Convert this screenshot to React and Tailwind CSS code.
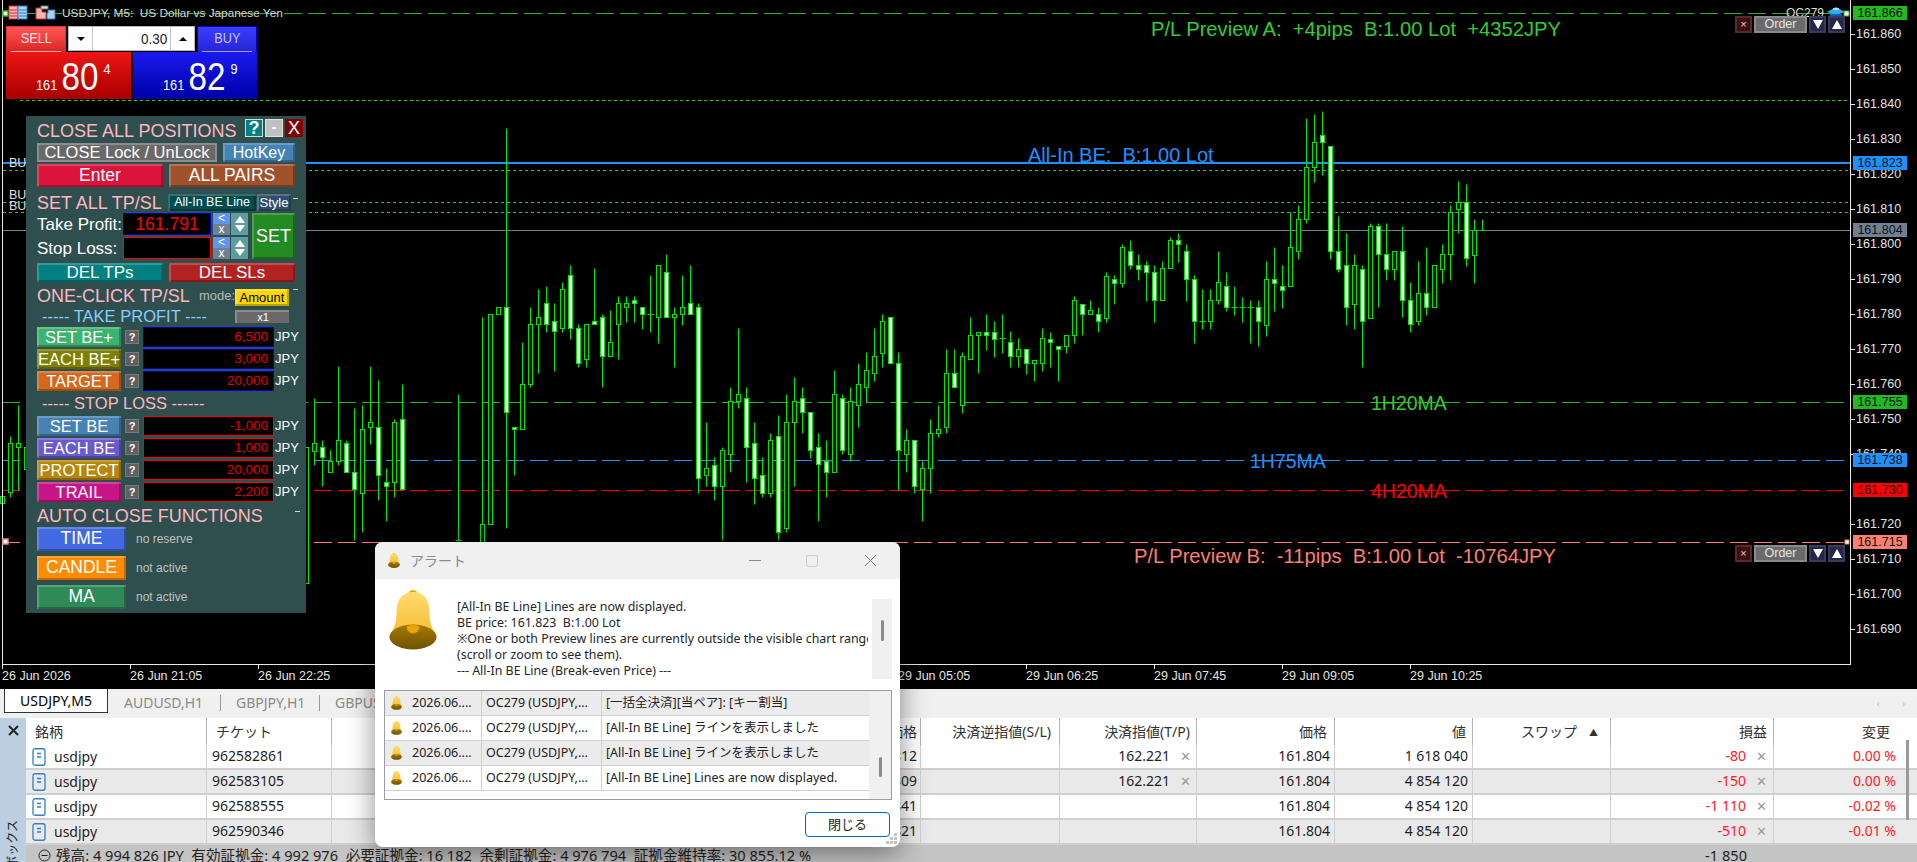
import React from 'react';

const bevel = 'shadow-[inset_2px_2px_0_rgba(255,255,255,0.2),inset_-2px_-2px_0_rgba(0,0,0,0.25)]';

// candles on the M5 chart: [high, bodyTop, bodyBottom, low, bullish], in crop units, y = 100 + v / 3
const left = [
  [1040, 1040, 1449, 1449, 0], [895, 1030, 1052, 1095, 0], [1020, 1042, 1072, 1158, 1], [1050, 1084, 1115, 1115, 0],
  [798, 1021, 1084, 1095, 0], [1020, 1030, 1115, 1115, 1], [924, 1115, 1168, 1320, 1], [915, 988, 1178, 1295, 0],
  [798, 967, 980, 1032, 0], [840, 980, 1126, 1200, 1], [1105, 1147, 1157, 1263, 1], [957, 967, 1147, 1190, 0],
  [852, 958, 1168, 1168, 1], null, null, null, null, null, null, [882, 1320, 1320, 1323, 0], null, null,
  [652, 1273, 1500, 1500, 0], [643, 643, 1273, 1273, 0], [622, 622, 643, 643, 0], [84, 622, 937, 1283, 1],
  [980, 980, 988, 1126, 1], [727, 853, 988, 988, 0], [622, 673, 853, 862, 0], [567, 652, 673, 820, 0],
  [558, 610, 673, 695, 1], [610, 664, 694, 812, 1], [546, 568, 685, 695, 0], [495, 526, 685, 716, 1],
  [672, 685, 790, 800, 1], [673, 673, 778, 800, 0], [504, 664, 673, 673, 1], [643, 652, 769, 862, 1],
  [630, 727, 769, 769, 0], [588, 610, 673, 778, 0], [588, 610, 622, 666, 0], [588, 601, 610, 666, 1],
  [622, 622, 643, 687, 1], [525, 643, 643, 695, 0], [496, 496, 652, 728, 0], [462, 517, 652, 652, 1],
  [622, 643, 652, 800, 0], [525, 622, 643, 675, 0], [495, 610, 643, 643, 1], [610, 622, 1135, 1178, 1],
  [966, 1105, 1126, 1158, 0], [1072, 1094, 1157, 1200, 1], [1040, 1051, 1157, 1320, 0], [862, 904, 1063, 1115, 0],
  [685, 883, 904, 925, 0], [862, 895, 1042, 1147, 1], [966, 1030, 1135, 1212, 1], [1072, 1126, 1178, 1190, 1],
  [1000, 1021, 1178, 1190, 0], [946, 1009, 1295, 1320, 1], [882, 967, 1283, 1295, 0], [831, 904, 967, 1158, 0],
  [862, 895, 937, 1000, 1], [937, 937, 1051, 1073, 1], [1000, 1042, 1093, 1263, 1], [1021, 1084, 1115, 1190, 1],
  [810, 883, 1115, 1115, 0], [882, 895, 1051, 1063, 1], [862, 904, 1063, 1084, 0], [790, 853, 916, 980, 0],
  [757, 811, 862, 905, 0], [685, 769, 820, 842, 0], [643, 664, 758, 800, 0], [652, 652, 790, 790, 1],
  [757, 790, 1051, 1170, 1], [988, 1021, 1063, 1116, 0], [1021, 1021, 1157, 1178, 1], [1084, 1105, 1168, 1263, 0],
  [957, 1000, 1105, 1178, 0], [915, 988, 1000, 1010, 0], [747, 820, 980, 1000, 0], [747, 820, 862, 862, 1],
  [757, 769, 916, 938, 0], [652, 706, 778, 778, 0], [695, 695, 706, 820, 0], [643, 695, 706, 750, 1],
  [663, 695, 716, 770, 1],
];

const right = [
  [642, 715, 715, 760, 0], [693, 727, 769, 800, 1], [714, 748, 769, 800, 0], [748, 748, 790, 822, 1],
  [779, 779, 790, 842, 0], [685, 715, 790, 812, 0], [695, 716, 727, 800, 1], [737, 737, 748, 842, 1],
  [706, 706, 737, 758, 0], [589, 601, 706, 728, 0], [611, 611, 643, 706, 1], [600, 631, 643, 643, 0],
  [622, 643, 664, 695, 1], [517, 527, 653, 665, 0], [526, 538, 548, 611, 1], [433, 442, 548, 560, 0],
  [420, 454, 496, 507, 1], [462, 496, 506, 540, 1], [484, 496, 517, 602, 1], [496, 517, 601, 665, 1],
  [484, 505, 601, 601, 0], [412, 421, 505, 505, 0], [400, 421, 433, 485, 1], [433, 454, 538, 602, 1],
  [526, 538, 664, 728, 1], [568, 664, 664, 686, 0], [568, 601, 664, 686, 0], [454, 547, 601, 612, 0],
  [517, 559, 622, 632, 1], [558, 622, 622, 645, 0], [590, 622, 622, 665, 0], [600, 622, 622, 728, 0],
  [600, 622, 664, 738, 1], [484, 538, 674, 708, 0], [442, 538, 548, 632, 1], [496, 559, 569, 623, 1],
  [336, 442, 559, 559, 0], [316, 358, 454, 476, 0], [54, 202, 358, 370, 0], [42, 127, 202, 245, 0],
  [33, 106, 127, 225, 1], [139, 139, 454, 476, 1], [348, 454, 506, 517, 1], [400, 496, 622, 675, 1],
  [463, 496, 611, 687, 0], [496, 506, 664, 800, 1], [369, 379, 653, 653, 0], [370, 379, 463, 622, 1],
  [369, 463, 506, 540, 1], [454, 454, 506, 540, 0], [379, 454, 601, 652, 1], [547, 601, 673, 695, 1],
  [484, 580, 664, 675, 0], [442, 580, 622, 645, 1], [496, 496, 622, 622, 0], [433, 463, 506, 548, 0],
  [316, 337, 463, 540, 0], [243, 307, 328, 400, 0], [253, 307, 475, 497, 1], [358, 391, 464, 548, 0],
  [358, 391, 391, 391, 0],
];

const edge = [
  [2, 1188, 1188, 1209, 1209, 0], [10, 1008, 1029, 1176, 1191, 0], [18, 915, 1029, 1041, 1170, 0], [26, 1041, 1041, 1107, 1107, 0],
];

const axisPrices = [
  ['161.860', 34], ['161.850', 69], ['161.840', 104], ['161.830', 139], ['161.820', 174], ['161.810', 209],
  ['161.800', 244], ['161.790', 279], ['161.780', 314], ['161.770', 349], ['161.760', 384], ['161.750', 419],
  ['161.740', 454], ['161.720', 524], ['161.710', 559], ['161.700', 594], ['161.690', 629],
];

const priceTags = [
  ['161.866', 'top-[6px] bg-[#22b922]'], ['161.823', 'top-[156px] bg-[#1e90ff]'], ['161.804', 'top-[223px] bg-[#708090]'],
  ['161.755', 'top-[395px] bg-[#22b922]'], ['161.738', 'top-[453px] bg-[#1e90ff]'], ['161.730', 'top-[483px] bg-[#ff0000]'],
  ['161.715', 'top-[535px] bg-[#fa8072]'],
];

const timeLabels = [
  ['26 Jun 2026', 2], ['26 Jun 21:05', 130], ['26 Jun 22:25', 258], ['29 Jun 05:05', 898], ['29 Jun 06:25', 1026],
  ['29 Jun 07:45', 1154], ['29 Jun 09:05', 1282], ['29 Jun 10:25', 1410],
];

const levels = [
  { y: 13.5, x: 20, stroke: '#22b922', dash: '18 6' }, { y: 100.5, x: 20, stroke: '#22cc22', dash: '3 3' },
  { y: 170.5, x: 3, stroke: '#22cc22', dash: '3 3' }, { y: 202.5, x: 3, stroke: '#22cc22', dash: '3 3' },
  { y: 212.5, x: 3, stroke: '#22cc22', dash: '3 3' }, { y: 230.5, x: 3, stroke: '#708090' },
  { y: 402.5, x: 2, stroke: '#22b922', dash: '18 6' }, { y: 460.5, x: 2, stroke: '#1e90ff', dash: '18 6' },
  { y: 490.5, x: 2, stroke: '#ff0000', dash: '18 6' }, { y: 542.5, x: 2, stroke: '#fa8072', dash: '18 6' },
];

const Candle = ({ x, c }) => {
  const [hi, top, bot, lo, up] = c;
  const ya = (v) => Math.round(100 + v / 3) + 0.5;
  const cx = x + 0.5;
  return (
    <g>
      <line x1={cx} x2={cx} y1={ya(hi)} y2={ya(lo)} stroke="#00e600" />
      {top === bot ? (
        <line x1={cx - 3} x2={cx + 3} y1={ya(top)} y2={ya(top)} stroke="#00e600" />
      ) : (
        <rect x={cx - 2} y={ya(top)} width={4} height={ya(bot) - ya(top)} fill={up ? '#ffffff' : '#000000'} stroke="#00e600" />
      )}
    </g>
  );
};

const ChartDrawing = () => (
  <svg className="absolute inset-0 w-[1917px] h-[689px]" viewBox="0 0 1917 689">
    {levels.map((l) => (
      <line key={l.y} x1={l.x} x2="1850" y1={l.y} y2={l.y} stroke={l.stroke} strokeDasharray={l.dash} />
    ))}
    <line x1="3" x2="1850" y1="163" y2="163" stroke="#1e90ff" strokeWidth="2" />
    {edge.map(([x, a, b, c, d, e]) => <Candle key={x} x={x} c={[a, b, c, d, e]} />)}
    {left.map((c, i) => c && <Candle key={i} x={306 + 8 * i} c={c} />)}
    {right.map((c, i) => <Candle key={i} x={1002 + 8 * i} c={c} />)}
    <rect x="2" y="0" width="1" height="665" fill="#e8e8e8" />
    <rect x="1850" y="0" width="1" height="665" fill="#e8e8e8" />
    <rect x="2" y="664" width="1849" height="1" fill="#e8e8e8" />
    {axisPrices.map(([p, y]) => <rect key={p} x="1851" y={y} width="4" height="1" fill="#e8e8e8" />)}
    {timeLabels.map(([t, x]) => <rect key={t} x={x} y="665" width="1" height="4" fill="#e8e8e8" />)}
    <rect x="3" y="11" width="5" height="5" fill="#ffffff" stroke="#22b922" strokeWidth="1.5" />
    <rect x="1844" y="11" width="5" height="5" fill="#ffffff" stroke="#22b922" />
    <rect x="3" y="539" width="5" height="5" fill="#ffffff" stroke="#fa8072" strokeWidth="1.5" />
    <rect x="1845" y="540" width="4" height="4" fill="#ffffff" stroke="#fa8072" />
    <g>
      <rect x="9" y="6" width="9" height="13" fill="#f5b5b0" stroke="#d03030" />
      <rect x="18" y="6" width="9" height="13" fill="#a8d4f2" stroke="#2878c8" />
      <path d="M10 10h7M10 13h7M10 16h7" stroke="#d03030" />
      <path d="M19 10h7M19 13h7M19 16h7" stroke="#2878c8" />
      <path d="M36 8h6v4l4 0v7h-10z" fill="#f5b5b0" stroke="#d03030" />
      <path d="M48 10h7v9h-8v-6h1z" fill="#a8d4f2" stroke="#2878c8" />
      <rect x="41" y="6" width="7" height="3" fill="#dddddd" stroke="#777777" />
    </g>
    <g>
      <path d="M1827 12 L1836 7 L1845 12 L1836 15z" fill="#38a8f0" />
      <path d="M1830 14 h12 v2 h-12z" fill="#1060a8" />
      <path d="M1833 8 h6 v2 h-6z" fill="#a0dcff" />
    </g>
  </svg>
);

const ChartTagButtons = ({ top }) => (
  <div className={`absolute left-[1735px] ${top} flex gap-[2px] h-[17px]`}>
    <div className="w-[17px] flex items-center justify-center bg-[#3c1010] border-2 border-[#5a2a2a] text-[#e8c8c8] text-[11px] leading-none">×</div>
    <div className="w-[53px] flex items-center justify-center bg-[#6a6a6a] border-2 border-[#8a8a8a] text-[#e4e4e4] text-[12.5px] leading-none">Order</div>
    <div className="w-[17px] flex items-center justify-center bg-[#26264a] border-2 border-[#3a3a5c]"><div className="w-0 h-0 border-x-[5px] border-x-transparent border-t-[9px] border-t-white" /></div>
    <div className="w-[17px] flex items-center justify-center bg-[#26264a] border-2 border-[#3a3a5c]"><div className="w-0 h-0 border-x-[5px] border-x-transparent border-b-[9px] border-b-white" /></div>
  </div>
);

const Chart = () => (
  <div className="relative h-[689px] bg-black overflow-hidden">
    <ChartDrawing />
    <span className="absolute left-[62px] top-[6px] text-[11.8px] leading-[15px] text-[#d8d8d8] whitespace-pre">USDJPY, M5:  US Dollar vs Japanese Yen</span>
    <span className="absolute left-[1786px] top-[6px] text-[12px] leading-[15px] text-[#d8d8d8]">OC279</span>
    <span className="absolute left-[9px] top-[156px] text-[12.5px] leading-[14px] text-[#e0e0e0]">BU</span>
    <span className="absolute left-[9px] top-[188px] text-[12.5px] leading-[14px] text-[#e0e0e0]">BU</span>
    <span className="absolute left-[9px] top-[199px] text-[12.5px] leading-[14px] text-[#e0e0e0]">BU</span>

    {axisPrices.map(([p, y]) => (
      <span key={p} className="absolute left-[1856px] text-[12.5px] leading-[14px] text-[#e4e4e4]" style={{ top: y - 7 }}>{p}</span>
    ))}
    {priceTags.map(([p, cls]) => (
      <span key={p} className={`absolute left-[1853px] w-[54px] h-[14px] text-center text-[12.5px] leading-[14px] text-[#101010] ${cls}`}>{p}</span>
    ))}
    {timeLabels.map(([t, x]) => (
      <span key={t} className="absolute top-[669px] text-[12.5px] leading-[14px] text-[#e4e4e4] whitespace-pre" style={{ left: x }}>{t}</span>
    ))}

    <span className="absolute left-[1151px] top-[17px] text-[20.2px] leading-[24px] text-[#32cd32] whitespace-pre">P/L Preview A:  +4pips  B:1.00 Lot  +4352JPY</span>
    <span className="absolute left-[1028px] top-[143px] text-[20px] leading-[24px] text-[#1e90ff] whitespace-pre">All-In BE:  B:1.00 Lot</span>
    <span className="absolute left-[1371px] top-[391px] text-[19.5px] leading-[24px] text-[#32cd32]">1H20MA</span>
    <span className="absolute left-[1250px] top-[449px] text-[19.5px] leading-[24px] text-[#1e90ff]">1H75MA</span>
    <span className="absolute left-[1371px] top-[479px] text-[19.5px] leading-[24px] text-[#ff0000]">4H20MA</span>
    <span className="absolute left-[1134px] top-[544px] text-[20.2px] leading-[24px] text-[#fa8072] whitespace-pre">P/L Preview B:  -11pips  B:1.00 Lot  -10764JPY</span>

    <ChartTagButtons top="top-[16px]" />
    <ChartTagButtons top="top-[545px]" />
    <OneClick />
    <Panel />
  </div>
);

const OneClick = () => (
  <div className="absolute left-[6px] top-[26px] w-[252px] h-[73px] flex flex-col">
    <div className="flex h-[26px] gap-[2px]">
      <div className="w-[60px] h-[26px] pb-[2px] bg-gradient-to-b from-[#ff5555] to-[#dd2222] border-x border-t border-[#e03030] text-[#ffe0e0] text-[15px] flex flex-col items-center justify-center relative">
        <span className="scale-x-[0.85]">SELL</span>
        <div className="absolute left-[4px] right-[4px] bottom-0 h-px bg-[#ffb0b0]" />
      </div>
      <div className="w-[127px] h-[25px] flex bg-white border border-[#b8b8b8] text-[15px] text-[#202020] leading-[23px]">
        <div className="w-[24px] border-r border-[#c8c8c8] flex items-center justify-center"><div className="w-0 h-0 border-x-[4px] border-x-transparent border-t-[4px] border-t-black" /></div>
        <div className="flex-1 text-right pr-[3px] scale-x-[0.9] origin-right">0.30</div>
        <div className="w-[24px] border-l border-[#c8c8c8] flex items-center justify-center"><div className="w-0 h-0 border-x-[4px] border-x-transparent border-b-[4px] border-b-black" /></div>
      </div>
      <div className="w-[60px] h-[26px] pb-[2px] bg-gradient-to-b from-[#3c3cff] to-[#2424d8] border-x border-t border-[#0000c0] text-[#c8c8ff] text-[15px] flex items-center justify-center relative">
        <span className="scale-x-[0.85]">BUY</span>
        <div className="absolute left-[4px] right-[4px] bottom-0 h-px bg-[#a0a0ff]" />
      </div>
    </div>
    <div className="flex h-[47px] gap-[2px] text-white">
      <Quote from="from-[#ee1515]" to="to-[#a80000]" big="80" small="4" w="w-[125px]" />
      <Quote from="from-[#1a1aee]" to="to-[#0000a8]" big="82" small="9" w="w-[124px]" />
    </div>
  </div>
);

const Quote = ({ from, to, big, small, w }) => (
  <div className={`${w} h-[47px] pl-[30px] overflow-hidden bg-gradient-to-b ${from} ${to}`}>
    <div className="flex items-start origin-left scale-x-[0.85]">
      <span className="text-[15px] mt-[25px] mr-[5px] leading-[15px]">161</span>
      <span className="text-[39px] mt-[5px] leading-[39px]">{big}</span>
      <span className="text-[15px] mt-[9px] ml-[6px] leading-[15px]">{small}</span>
    </div>
  </div>
);

const PanelBtn = ({ className, children }) => (
  <div className={`flex items-center justify-center text-white whitespace-nowrap leading-none ${bevel} ${className}`}>{children}</div>
);

const Title = ({ className, children }) => (
  <div className={`text-[#ffb6c1] text-[18px] leading-none whitespace-nowrap ${className}`}>{children}</div>
);

const Dash = () => <div className="w-[5px] h-px bg-[#c8d0d0]" />;

const AmountRow = ({ label, color, value, border }) => (
  <div className="flex items-center h-[20px] mt-[2px]">
    <PanelBtn className={`w-[84px] h-[20px] text-[16.5px] ${color}`}>{label}</PanelBtn>
    <div className="w-[14px] h-[14px] ml-[4px] bg-[#5f5f5f] border border-[#7a7a7a] text-white text-[11px] font-bold leading-[12px] text-center">?</div>
    <div className={`w-[131px] h-[20px] ml-[4px] bg-black border ${border} text-[#e00000] text-[13.5px] leading-[18px] text-right pr-[5px]`}>{value}</div>
    <span className="ml-px text-[13px] text-white">JPY</span>
  </div>
);

const Nudge = () => (
  <div className="flex gap-px">
    <div className="w-[17px] h-[22px] flex flex-col text-white text-[12px] leading-[11px] text-center">
      <div className="h-[11px] bg-[#6495ed]">&lt;</div>
      <div className="h-[11px] bg-[#708090]">x</div>
    </div>
    <div className="w-[17px] h-[22px] flex flex-col items-center bg-[#5f9ea0] justify-center gap-[2px]">
      <div className="w-0 h-0 border-x-[5px] border-x-transparent border-b-[7px] border-b-white" />
      <div className="w-0 h-0 border-x-[5px] border-x-transparent border-t-[7px] border-t-white" />
    </div>
  </div>
);

const Panel = () => (
  <div className="absolute left-[26px] top-[116px] w-[280px] h-[497px] bg-[#2f4f4f] pl-[11px] flex flex-col">
    <div className="flex items-center h-[21px] mt-px">
      <Title className="w-[208px] mt-[6px]">CLOSE ALL POSITIONS</Title>
      <div className="w-[18px] h-[18px] bg-[#008080] border border-[#c8e0e0] text-white font-bold text-[18px] leading-[16px] text-center">?</div>
      <div className="w-[18px] h-[18px] ml-[2px] bg-[#c0c0c0] border border-[#e0e0e0] text-white font-bold text-[15px] leading-[14px] text-center">-</div>
      <div className="w-[18px] h-[18px] ml-[2px] bg-[#800000] text-white text-[18px] leading-[18px] text-center">X</div>
    </div>
    <div className="flex gap-[6px] h-[19px] mt-[5px]">
      <div className="w-[180px] flex items-center justify-center bg-[#696969] border-2 border-[#8c8c8c] text-white text-[16.5px] leading-none">CLOSE Lock / UnLock</div>
      <PanelBtn className="w-[72px] bg-[#4682b4] text-[16px]">HotKey</PanelBtn>
    </div>
    <div className="flex gap-[6px] h-[23px] mt-[2px]">
      <PanelBtn className="w-[126px] bg-[#dc143c] text-[17.5px]">Enter</PanelBtn>
      <PanelBtn className="w-[126px] bg-[#a0522d] text-[17.5px]">ALL PAIRS</PanelBtn>
    </div>
    <div className="flex items-center h-[17px] mt-[7px]">
      <Title className="w-[131px]">SET ALL TP/SL</Title>
      <PanelBtn className="w-[88px] h-[17px] bg-[#004d4d] text-[12.5px]">All-In BE Line</PanelBtn>
      <PanelBtn className="w-[34px] h-[17px] ml-px bg-[#2f4f6f] text-[13px]">Style</PanelBtn>
      <div className="ml-[2px] mb-[8px]"><Dash /></div>
    </div>
    <div className="flex h-[46px] mt-[2px]">
      <div className="flex flex-col gap-[2px] w-[215px]">
        <div className="flex items-center h-[22px]">
          <span className="w-[86px] text-white text-[17px] leading-none">Take Profit:</span>
          <div className="w-[88px] h-[22px] bg-black border border-[#0000cd] text-[#ff0000] text-[17.5px] leading-[20px] text-center">161.791</div>
          <div className="ml-[2px]"><Nudge /></div>
        </div>
        <div className="flex items-center h-[22px]">
          <span className="w-[86px] text-white text-[17px] leading-none">Stop Loss:</span>
          <div className="w-[88px] h-[22px] bg-black border border-[#ff0000]" />
          <div className="ml-[2px]"><Nudge /></div>
        </div>
      </div>
      <PanelBtn className="w-[43px] h-[46px] bg-[#228b22] text-[18px]">SET</PanelBtn>
    </div>
    <div className="flex gap-[6px] h-[19px] mt-[4px]">
      <PanelBtn className="w-[126px] bg-[#008080] text-[17px]">DEL TPs</PanelBtn>
      <PanelBtn className="w-[126px] bg-[#b22222] text-[17px]">DEL SLs</PanelBtn>
    </div>
    <div className="flex items-center h-[21px] mt-[3px]">
      <Title className="w-[162px]">ONE-CLICK TP/SL</Title>
      <span className="w-[36px] text-[#b8b8b8] text-[13px]">mode:</span>
      <PanelBtn className="w-[54px] h-[17px] mt-[4px] bg-[#ffd700] !text-black text-[13px]">Amount</PanelBtn>
      <div className="ml-[4px] mb-[12px]"><Dash /></div>
    </div>
    <div className="flex items-center h-[17px] mt-[2px]">
      <div className="w-[198px] pl-[5px] text-[#87cefa] text-[16.5px] leading-none whitespace-pre">----- TAKE PROFIT ----</div>
      <div className="w-[54px] h-[13px] bg-[#696969] border-t-2 border-l-2 border-[#8c8c8c] text-white text-[11px] leading-[11px] text-center">x1</div>
    </div>
    <AmountRow label="SET BE+" color="bg-[#3cb371]" value="6,500" border="border-[#0000cd]" />
    <AmountRow label="EACH BE+" color="bg-[#808000]" value="3,000" border="border-[#0000cd]" />
    <AmountRow label="TARGET" color="bg-[#d2691e]" value="20,000" border="border-[#0000cd]" />
    <div className="h-[21px] mt-[2px] flex items-center pl-[5px] text-[#ffb6c1] text-[16.5px] leading-none whitespace-pre">----- STOP LOSS ------</div>
    <AmountRow label="SET BE" color="bg-[#4682b4]" value="-1,000" border="border-[#ff0000]" />
    <AmountRow label="EACH BE" color="bg-[#6a5acd]" value="1,000" border="border-[#ff0000]" />
    <AmountRow label="PROTECT" color="bg-[#b8860b]" value="20,000" border="border-[#ff0000]" />
    <AmountRow label="TRAIL" color="bg-[#c71585]" value="2,200" border="border-[#ff0000]" />
    <div className="flex items-center h-[23px] mt-[2px]">
      <Title className="w-[258px]">AUTO CLOSE FUNCTIONS</Title>
      <div className="mb-[8px]"><Dash /></div>
    </div>
    <div className="flex flex-col gap-[5px]">
      <AutoRow label="TIME" color="bg-[#4169e1]" note="no reserve" />
      <AutoRow label="CANDLE" color="bg-[#ff8c00]" note="not active" />
      <AutoRow label="MA" color="bg-[#2e8b57]" note="not active" />
    </div>
  </div>
);

const AutoRow = ({ label, color, note }) => (
  <div className="flex items-center h-[24px]">
    <PanelBtn className={`w-[89px] h-[24px] text-[17.5px] ${color}`}>{label}</PanelBtn>
    <span className="ml-[10px] text-[#c0c0c0] text-[12px]">{note}</span>
  </div>
);

const Tabs = () => (
  <div className="h-[29px] bg-[#f0f0f0] flex items-start text-[14px] text-[#8a8a8a]">
    <div className="ml-[4px] w-[104px] h-[24px] bg-white border border-[#333333] border-t-0 text-black text-center leading-[23px]">USDJPY,M5</div>
    <div className="ml-[16px] w-[96px] h-[24px] mt-[2px] leading-[24px]">AUDUSD,H1</div>
    <div className="w-px h-[16px] mt-[6px] bg-[#9a9a9a]" />
    <div className="ml-[15px] w-[83px] h-[24px] mt-[2px] leading-[24px]">GBPJPY,H1</div>
    <div className="w-px h-[16px] mt-[6px] bg-[#9a9a9a]" />
    <div className="ml-[15px] h-[24px] mt-[2px] leading-[24px]">GBPUSD,H1</div>
    <div className="ml-auto mr-[12px] mt-[8px] flex gap-[22px] text-[#c0c0c0] text-[10px] leading-[12px]"><span>‹</span><span>›</span></div>
  </div>
);

const gridCols = 'grid grid-cols-[181px_125px_589px_139px_137px_138px_138px_138px_163px_143px]';
const headers = [
  ['銘柄', 'text-left pl-[9px]'], ['チケット', 'text-left pl-[9px]'], ['価格', 'text-right pr-[3px]'], ['決済逆指値(S/L)', 'text-right pr-[8px]'],
  ['決済指値(T/P)', 'text-right pr-[6px]'], ['価格', 'text-right pr-[7px]'], ['値', 'text-right pr-[6px]'], ['スワップ', 'text-right pr-[12px]'],
  ['損益', 'text-right pr-[6px]'], ['変更', 'text-right pr-[27px]'],
];
const rows = [
  ['962582861', '161.812', '162.221', '1 618 040', '-80', '0.00 %'],
  ['962583105', '161.809', '162.221', '4 854 120', '-150', '0.00 %'],
  ['962588555', '161.841', '', '4 854 120', '-1 110', '-0.02 %'],
  ['962590346', '161.821', '', '4 854 120', '-510', '-0.01 %'],
];

const DocIcon = () => (
  <svg className="ml-[6px] mr-[8px]" width="14" height="18" viewBox="0 0 14 18" fill="none">
    <rect x="1" y="0.75" width="12" height="16.5" rx="2" stroke="#2f80c8" strokeWidth="1.3" />
    <path d="M5 5.5h4M5 9h4" stroke="#2f80c8" strokeWidth="1.3" />
  </svg>
);

const RemoveX = () => <span className="ml-[10px] text-[#9a9a9a] text-[13px]">✕</span>;

const Terminal = () => (
  <div className="flex h-[144px] overflow-hidden">
    <div className="w-[26px] bg-[#bccfe0] flex flex-col items-center overflow-hidden">
      <svg className="mt-[7px] shrink-0" width="11" height="11" viewBox="0 0 11 11"><path d="M1 1l9 9M10 1l-9 9" stroke="#222222" strokeWidth="2" /></svg>
      <span className="mt-[84px] shrink-0 [writing-mode:vertical-rl] [text-orientation:sideways] rotate-180 text-[12px] leading-[16px] text-[#222222] whitespace-nowrap">ツールボックス</span>
    </div>
    <div className="flex-1 flex flex-col min-w-0">
      <div className={`${gridCols} h-[27px] bg-white text-[14px] leading-[27px] text-[#333333]`}>
        {headers.map(([h, cls], i) => (
          <div key={i} className={`border-r border-[#b4b4b4] ${cls} ${i === 9 ? 'border-r-0' : ''}`}>
            {h}{i === 7 && <span className="ml-[12px] text-[9px] align-[1px]">▲</span>}
          </div>
        ))}
      </div>
      {rows.map((r, i) => (
        <div key={r[0]} className={`${gridCols} h-[25px] text-[14px] leading-[22px] text-[#1f1f1f] border-b-2 border-[#cfcfcf] ${i % 2 ? 'bg-[#e9e9e9]' : 'bg-white'}`}>
          <div className="flex items-center border-r border-[#cfcfcf]"><DocIcon />usdjpy</div>
          <div className="pl-[5px] border-r border-[#cfcfcf]">{r[0]}</div>
          <div className="text-right pr-[3px] border-r border-[#cfcfcf]">{r[1]}</div>
          <div className="border-r border-[#cfcfcf]" />
          <div className="text-right pr-[5px] border-r border-[#cfcfcf]">{r[2]}{r[2] && <RemoveX />}</div>
          <div className="text-right pr-[4px] border-r border-[#cfcfcf]">161.804</div>
          <div className="text-right pr-[4px] border-r border-[#cfcfcf]">{r[3]}</div>
          <div className="border-r border-[#cfcfcf]" />
          <div className="text-right pr-[6px] border-r border-[#cfcfcf] text-[#ff2020]">{r[4]}<RemoveX /></div>
          <div className="text-right pr-[21px] text-[#ff2020]">{r[5]}</div>
        </div>
      ))}
      <div className="h-[17px] bg-[#c4c4c4] flex items-start text-[14.6px] leading-[20px] text-[#1f1f1f] whitespace-pre relative">
        <svg className="ml-[12px] mr-[5px] mt-[4px]" width="13" height="13" viewBox="0 0 13 13" fill="none"><circle cx="6.5" cy="6.5" r="5.5" stroke="#222222" /><path d="M3.5 6.5h6" stroke="#222222" /></svg>
        残高: 4 994 826 JPY  有効証拠金: 4 992 976  必要証拠金: 16 182  余剰証拠金: 4 976 794  証拠金維持率: 30 855.12 %
        <span className="ml-auto mr-[170px]">-1 850</span>
      </div>
    </div>
    <div className="absolute left-[1906px] top-[740px] w-[3px] h-[80px] bg-[#9a9a9a]" />
  </div>
);

const Bell = ({ className }) => (
  <svg className={className} viewBox="0 0 48 60">
    <defs>
      <linearGradient id="bellTop" x1="0" y1="0" x2="0" y2="1"><stop offset="0" stopColor="#ffdc6e" /><stop offset="1" stopColor="#f6b92e" /></linearGradient>
      <linearGradient id="bellBot" x1="0" y1="0" x2="0" y2="1"><stop offset="0" stopColor="#a57a00" /><stop offset="1" stopColor="#6e5200" /></linearGradient>
    </defs>
    <circle cx="24" cy="4.5" r="4.5" fill="#f3a900" />
    <path d="M24 2C13 2 7.5 10 7.5 22c0 10-2 16-7 24 10 6 37 6 47 0-5-8-7-14-7-24C40.500 10 35 2 24 2z" fill="url(#bellTop)" />
    <ellipse cx="24" cy="47" rx="23.500" ry="12.500" fill="url(#bellBot)" />
    <path d="M17.500 37a6.500 6.500 0 0 0 13 0c0-1-3-2-6.500-2s-6.500 1-6.500 2z" fill="#e8a400" />
  </svg>
);

const alertRows = ['[一括全決済][当ペア]: [キー割当]', '[All-In BE Line] ラインを表示しました', '[All-In BE Line] ラインを表示しました', '[All-In BE Line] Lines are now displayed.'];

const AlertDialog = () => (
  <div className="absolute left-[375px] top-[542px] w-[525px] h-[305px] bg-white rounded-[8px] overflow-hidden shadow-[0_6px_28px_rgba(0,0,0,0.45)] flex flex-col font-['Noto_Sans','Noto_Sans_CJK_JP',sans-serif]">
    <div className="h-[37px] bg-[#f0f0f0] flex items-center">
      <Bell className="ml-[13px] w-[12px] h-[15px]" />
      <span className="ml-[10px] text-[14px] text-[#8a8a8a]">アラート</span>
      <div className="ml-[283px] w-[12px] h-px bg-[#8a8a8a]" />
      <div className="ml-[45px] w-[12px] h-[12px] border border-[#d0d0d0] rounded-[2px]" />
      <svg className="ml-[46px]" width="13" height="13" viewBox="0 0 13 13"><path d="M1 1l11 11M12 1l-11 11" stroke="#777777" /></svg>
    </div>
    <div className="flex h-[110px]">
      <Bell className="ml-[14px] mt-[11px] w-[48px] h-[60px] shrink-0" />
      <div className="ml-[20px] mt-[20px] w-[411px] overflow-hidden text-[12.4px] leading-[16px] text-[#262626] whitespace-nowrap">
        <div>[All-In BE Line] Lines are now displayed.</div>
        <div className="whitespace-pre">BE price: 161.823  B:1.00 Lot</div>
        <div>※One or both Preview lines are currently outside the visible chart range</div>
        <div>(scroll or zoom to see them).</div>
        <div>--- All-In BE Line (Break-even Price) ---</div>
      </div>
      <div className="ml-[4px] mt-[20px] w-[20px] h-[80px] bg-[#f0f0f0] flex justify-center">
        <div className="mt-[21px] w-[3px] h-[21px] bg-[#8a8a8a] rounded-full" />
      </div>
    </div>
    <div className="ml-[9px] mt-px w-[508px] h-[110px] border border-[#9a9aa8] flex">
      <div className="w-[484px] flex flex-col">
        {alertRows.map((m, i) => (
          <div key={i} className={`h-[25px] flex items-center border-b border-[#d0d0d0] text-[12.5px] text-[#222222] whitespace-nowrap ${i % 2 ? 'bg-white' : 'bg-[#ebebeb]'}`}>
            <div className="w-[97px] h-full flex items-center border-r border-[#d0d0d0]">
              <Bell className="ml-[6px] w-[11px] h-[14px]" />
              <span className="ml-[10px]">2026.06....</span>
            </div>
            <div className="w-[120px] h-full flex items-center pl-[4px] border-r border-[#d0d0d0]">OC279 (USDJPY,...</div>
            <div className="pl-[4px]">{m}</div>
          </div>
        ))}
      </div>
      <div className="flex-1 bg-[#f0f0f0] flex justify-center">
        <div className="mt-[66px] w-[3px] h-[20px] bg-[#8a8a8a] rounded-full" />
      </div>
    </div>
    <div className="flex justify-end pr-[10px] mt-[12px]">
      <div className="w-[85px] h-[25px] border border-[#0067c0] rounded-[4px] text-[13px] leading-[23px] text-center text-[#222222]">閉じる</div>
    </div>
    <svg className="absolute right-[2px] bottom-[2px]" width="12" height="12" viewBox="0 0 12 12" fill="#c4c4c4">
      <rect x="8" y="0" width="3" height="3" /><rect x="4" y="4" width="3" height="3" /><rect x="8" y="4" width="3" height="3" />
      <rect x="0" y="8" width="3" height="3" /><rect x="4" y="8" width="3" height="3" /><rect x="8" y="8" width="3" height="3" />
    </svg>
  </div>
);

export default function App() {
  return (
    <div className="relative w-[1917px] h-[862px] overflow-hidden font-['Liberation_Sans','Noto_Sans_CJK_JP',sans-serif]">
      <Chart />
      <div className="font-['Noto_Sans','Noto_Sans_CJK_JP',sans-serif]">
        <Tabs />
        <Terminal />
      </div>
      <AlertDialog />
    </div>
  );
}
